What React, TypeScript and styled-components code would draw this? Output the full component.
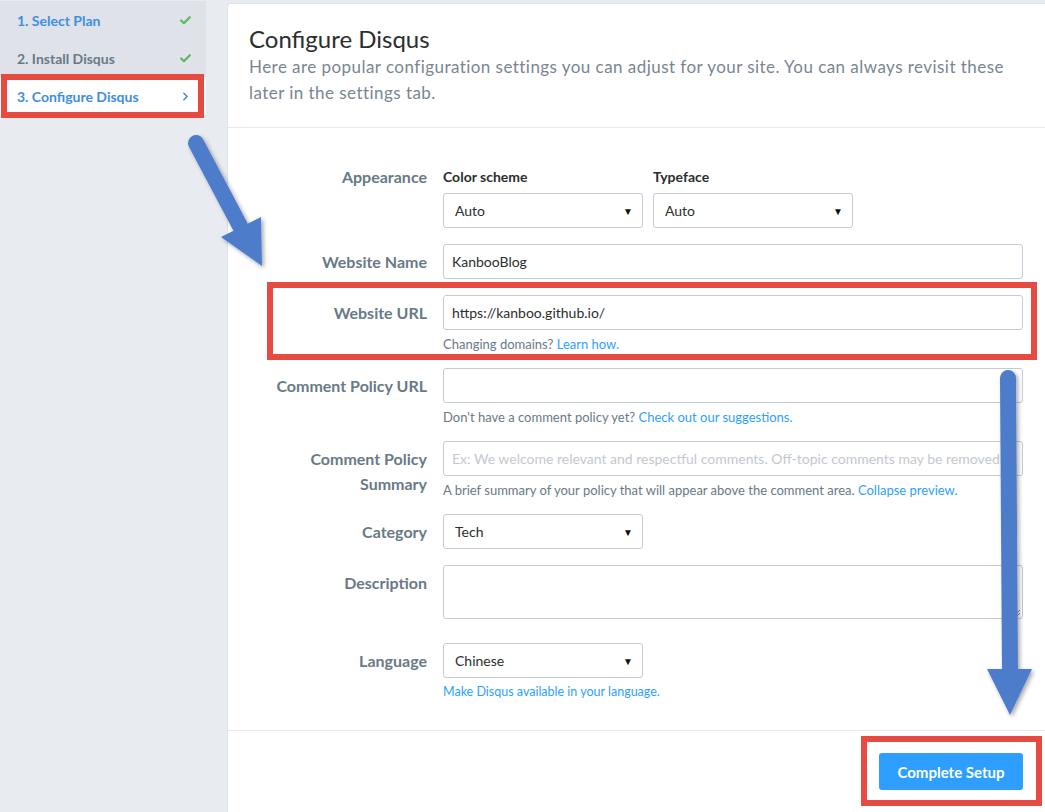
import React from "react";
import styled, { createGlobalStyle } from "styled-components";
import { Check, ChevronRight } from "lucide-react";

const Global = createGlobalStyle`
  html, body { margin: 0; padding: 0; background: #e8ebf0; }
  body { font-family: "Lato", "Noto Sans", sans-serif; }
  * { box-sizing: border-box; }
`;

const Page = styled.div`
  position: relative;
  width: 1045px;
  height: 812px;
  overflow: hidden;
  display: flex;
  align-items: flex-start;
  background: #e8ebf0;
`;

const Sidebar = styled.nav`
  width: 227px;
  flex: 0 0 227px;
  padding-top: 1px;
`;

const NavList = styled.ul`
  list-style: none;
  margin: 0;
  padding: 0;
  width: 206px;
  background: #dfe2e9;
`;

const NavItem = styled.li<{ $active?: boolean; $blue?: boolean }>`
  height: 38px;
  display: flex;
  align-items: center;
  justify-content: space-between;
  padding: 0 14px 0 17px;
  font-size: 14px;
  font-weight: 700;
  color: ${(p) => (p.$blue ? "#3d8fe0" : "#687a86")};
  background: ${(p) => (p.$active ? "#ffffff" : "transparent")};
`;

const Panel = styled.main`
  flex: 1;
  margin-top: 3px;
  min-height: 820px;
  background: #ffffff;
  border-left: 1px solid #dde1e8;
  border-top: 1px solid #dde1e8;
  border-top-left-radius: 3px;
`;

const Header = styled.header`
  padding: 20px 22px 21px 21px;
  border-bottom: 1px solid #e6e8ee;
`;

const Title = styled.h1`
  margin: 0;
  font-size: 24px;
  line-height: 30px;
  font-weight: 400;
  color: #2a2e2e;
`;

const Subtitle = styled.p`
  margin: 0;
  max-width: 790px;
  font-size: 17px;
  line-height: 26px;
  letter-spacing: 0.45px;
  color: #7a8591;
`;

const Form = styled.div`
  display: grid;
  grid-template-columns: 199px 1fr;
  column-gap: 16px;
  row-gap: 16px;
  padding: 40px 22px 30px 0;
  border-bottom: 1px solid #e6e8ee;
`;

const Label = styled.div<{ $compact?: boolean }>`
  text-align: right;
  font-size: 16px;
  font-weight: 700;
  color: #687a86;
  line-height: ${(p) => (p.$compact ? "18px" : "25px")};
  padding-top: ${(p) => (p.$compact ? "0" : "5px")};
`;

const Field = styled.div<{ $gapAfter?: number }>`
  display: flex;
  flex-direction: column;
  margin-bottom: ${(p) => p.$gapAfter ?? 0}px;
`;

const SubRow = styled.div`
  display: flex;
  gap: 10px;
`;

const SubCol = styled.div`
  display: flex;
  flex-direction: column;
`;

const SubLabel = styled.div`
  font-size: 14px;
  font-weight: 700;
  line-height: 18px;
  color: #2a2e2e;
  margin-bottom: 7px;
`;

const Input = styled.div<{ $placeholder?: boolean; $tall?: boolean }>`
  height: ${(p) => (p.$tall ? "54px" : "35px")};
  border: 1px solid #c6cad6;
  border-radius: 3px;
  padding: 0 8px;
  display: flex;
  align-items: ${(p) => (p.$tall ? "flex-start" : "center")};
  font-size: 14px;
  color: ${(p) => (p.$placeholder ? "#c4c8cf" : "#2a2e2e")};
  white-space: nowrap;
  overflow: hidden;
  position: relative;
`;

const Select = styled.div`
  width: 200px;
  height: 35px;
  border: 1px solid #c6cad6;
  border-radius: 3px;
  padding: 0 9px 0 11px;
  display: flex;
  align-items: center;
  justify-content: space-between;
  font-size: 14px;
  color: #2a2e2e;
`;

const Caret = styled.span`
  font-size: 10px;
  color: #111;
`;

const Grip = styled.svg`
  position: absolute;
  right: 1px;
  bottom: 1px;
`;

const Help = styled.div<{ $small?: boolean }>`
  margin-top: 5px;
  font-size: ${(p) => (p.$small ? "12.5px" : "13px")};
  line-height: 18px;
  color: #687a86;
  margin-bottom: -1px;
`;

const Link = styled.a`
  color: #2e9fff;
  text-decoration: none;
`;

const Footer = styled.div`
  display: flex;
  justify-content: flex-end;
  padding: 22px 22px;
`;

const Button = styled.button`
  width: 144px;
  height: 37px;
  border: none;
  border-radius: 3px;
  background: #2e9fff;
  color: #fff;
  font-family: inherit;
  font-size: 15px;
  font-weight: 700;
`;

const Highlight = styled.div<{ $l: number; $t: number; $w: number; $h: number }>`
  position: absolute;
  left: ${(p) => p.$l}px;
  top: ${(p) => p.$t}px;
  width: ${(p) => p.$w}px;
  height: ${(p) => p.$h}px;
  border: 6px solid #e64a40;
  pointer-events: none;
`;

const Overlay = styled.svg`
  position: absolute;
  left: 0;
  top: 0;
  pointer-events: none;
`;

const BLUE = "#4d7ccb";

export default function App() {
  return (
    <>
      <Global />
      <Page>
        <Sidebar>
          <NavList>
            <NavItem $blue>
              1. Select Plan <Check size={13} strokeWidth={4} color="#5cb85c" />
            </NavItem>
            <NavItem>
              2. Install Disqus <Check size={13} strokeWidth={4} color="#5cb85c" />
            </NavItem>
            <NavItem $blue $active>
              3. Configure Disqus <ChevronRight size={13} strokeWidth={3} color="#3d8fe0" />
            </NavItem>
          </NavList>
        </Sidebar>
        <Panel>
          <Header>
            <Title>Configure Disqus</Title>
            <Subtitle>
              Here are popular configuration settings you can adjust for your site. You can always revisit these
              later in the settings tab.
            </Subtitle>
          </Header>
          <Form>
            <Label $compact>Appearance</Label>
            <SubRow>
              <SubCol>
                <SubLabel>Color scheme</SubLabel>
                <Select>
                  Auto <Caret>▼</Caret>
                </Select>
              </SubCol>
              <SubCol>
                <SubLabel>Typeface</SubLabel>
                <Select>
                  Auto <Caret>▼</Caret>
                </Select>
              </SubCol>
            </SubRow>

            <Label>Website Name</Label>
            <Field>
              <Input>KanbooBlog</Input>
            </Field>

            <Label>Website URL</Label>
            <Field>
              <Input>https://kanboo.github.io/</Input>
              <Help>
                Changing domains? <Link>Learn how.</Link>
              </Help>
            </Field>

            <Label>Comment Policy URL</Label>
            <Field>
              <Input />
              <Help>
                Don't have a comment policy yet? <Link>Check out our suggestions.</Link>
              </Help>
            </Field>

            <Label>
              Comment Policy
              <br />
              Summary
            </Label>
            <Field>
              <Input $placeholder>
                Ex: We welcome relevant and respectful comments. Off-topic comments may be removed.
              </Input>
              <Help>
                A brief summary of your policy that will appear above the comment area. <Link>Collapse preview.</Link>
              </Help>
            </Field>

            <Label>Category</Label>
            <Field>
              <Select>
                Tech <Caret>▼</Caret>
              </Select>
            </Field>

            <Label>Description</Label>
            <Field $gapAfter={8}>
              <Input $tall>
                <Grip width="8" height="8" viewBox="0 0 8 8">
                  <path d="M7 1 L1 7 M7 4 L4 7" stroke="#888" strokeWidth="1" />
                </Grip>
              </Input>
            </Field>

            <Label>Language</Label>
            <Field>
              <Select>
                Chinese <Caret>▼</Caret>
              </Select>
              <Help $small>
                <Link>Make Disqus available in your language.</Link>
              </Help>
            </Field>
          </Form>
          <Footer>
            <Button>Complete Setup</Button>
          </Footer>
        </Panel>

        <Highlight $l={1} $t={74} $w={203} $h={44} />
        <Highlight $l={267} $t={282} $w={770} $h={78} />
        <Highlight $l={861} $t={736} $w={181} $h={70} />

        <Overlay width="1045" height="812" viewBox="0 0 1045 812">
          <defs>
            <filter id="sh" x="-20%" y="-20%" width="140%" height="140%">
              <feDropShadow dx="2" dy="2" stdDeviation="2" floodColor="#000" floodOpacity="0.35" />
            </filter>
          </defs>
          <g filter="url(#sh)" fill={BLUE} stroke={BLUE}>
            <line x1="196" y1="143" x2="240" y2="226" strokeWidth="16" strokeLinecap="round" />
            <polygon points="221,237 261,217 262,266" stroke="none" />
            <line x1="1008" y1="378" x2="1010" y2="672" strokeWidth="16" strokeLinecap="round" />
            <polygon points="987,669 1032,669 1010,715" stroke="none" />
          </g>
        </Overlay>
      </Page>
    </>
  );
}
